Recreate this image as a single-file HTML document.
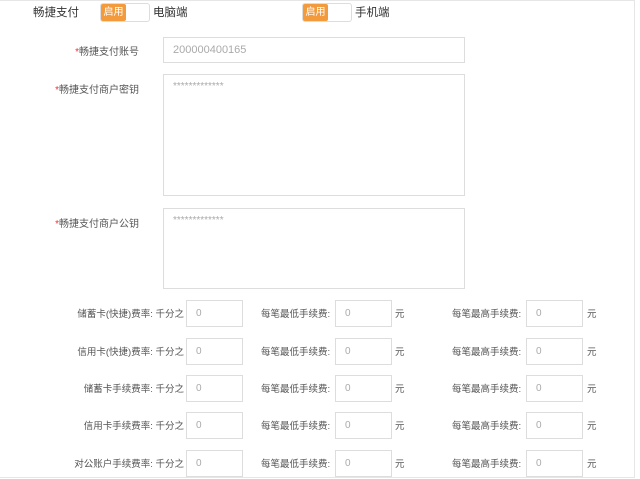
<!DOCTYPE html>
<html><head><meta charset="utf-8"><style>
*{margin:0;padding:0;box-sizing:border-box}
body{width:640px;height:479px;background:#fff;font-family:"Liberation Sans","Noto Sans CJK SC",sans-serif;position:relative;overflow:hidden;color:#333}
.frame{position:absolute;left:0;top:0;width:635px;height:478px;border:1px solid #e6e6e6;border-left:none}
.a{position:absolute;white-space:nowrap}
.tg{position:absolute;width:50px;height:19px;border:1px solid #ddd;border-radius:3px;background:#fff}
.tg span{position:absolute;left:0;top:0;width:25px;height:17px;background:#f39b3c;color:#fff;font-size:10px;line-height:17px;text-align:center;border-radius:2px}
.in{position:absolute;border:1px solid #ddd;background:#fff;color:#aaa;font-size:10px;padding-left:9px}
.lb{position:absolute;font-size:9.5px;color:#555;text-align:right;white-space:nowrap}
.r{color:#e33}
</style></head><body>
<div class="frame"></div>
<div class="a" style="left:33px;top:4px;font-size:11.5px">畅捷支付</div>
<div class="tg" style="left:100px;top:3px"><span>启用</span></div>
<div class="a" style="left:153px;top:4px;font-size:11.5px">电脑端</div>
<div class="tg" style="left:302px;top:3px"><span>启用</span></div>
<div class="a" style="left:355px;top:4px;font-size:11.5px">手机端</div>

<div class="lb" style="right:501px;top:43px;font-size:10px"><span class="r">*</span>畅捷支付账号</div>
<div class="in" style="left:163px;top:37px;width:302px;height:26px;line-height:24px;font-size:11px">200000400165</div>
<div class="lb" style="right:501px;top:81px;font-size:10px"><span class="r">*</span>畅捷支付商户密钥</div>
<div class="in" style="left:163px;top:74px;width:302px;height:122px;padding-top:6px">*************</div>
<div class="lb" style="right:501px;top:215px;font-size:10px"><span class="r">*</span>畅捷支付商户公钥</div>
<div class="in" style="left:163px;top:208px;width:302px;height:81px;padding-top:6px">*************</div>

<div id="rows"></div>
<script>
var labs=["储蓄卡(快捷)费率: 千分之","信用卡(快捷)费率: 千分之","储蓄卡手续费率: 千分之","信用卡手续费率: 千分之","对公账户手续费率: 千分之"];
var ys=[313,351,388,425,463],h="";
for(var i=0;i<5;i++){var y=ys[i];
h+='<div class="lb" style="right:456px;top:'+(y-7)+'px">'+labs[i]+'</div>';
h+='<div class="in" style="left:186px;top:'+(y-13)+'px;width:57px;height:27px;line-height:25px">0</div>';
h+='<div class="lb" style="left:261px;top:'+(y-7)+'px">每笔最低手续费:</div>';
h+='<div class="in" style="left:335px;top:'+(y-13)+'px;width:57px;height:27px;line-height:25px">0</div>';
h+='<div class="lb" style="left:395px;top:'+(y-7)+'px">元</div>';
h+='<div class="lb" style="left:452px;top:'+(y-7)+'px">每笔最高手续费:</div>';
h+='<div class="in" style="left:526px;top:'+(y-13)+'px;width:57px;height:27px;line-height:25px">0</div>';
h+='<div class="lb" style="left:587px;top:'+(y-7)+'px">元</div>';}
document.getElementById("rows").innerHTML=h;
</script>
</body></html>
